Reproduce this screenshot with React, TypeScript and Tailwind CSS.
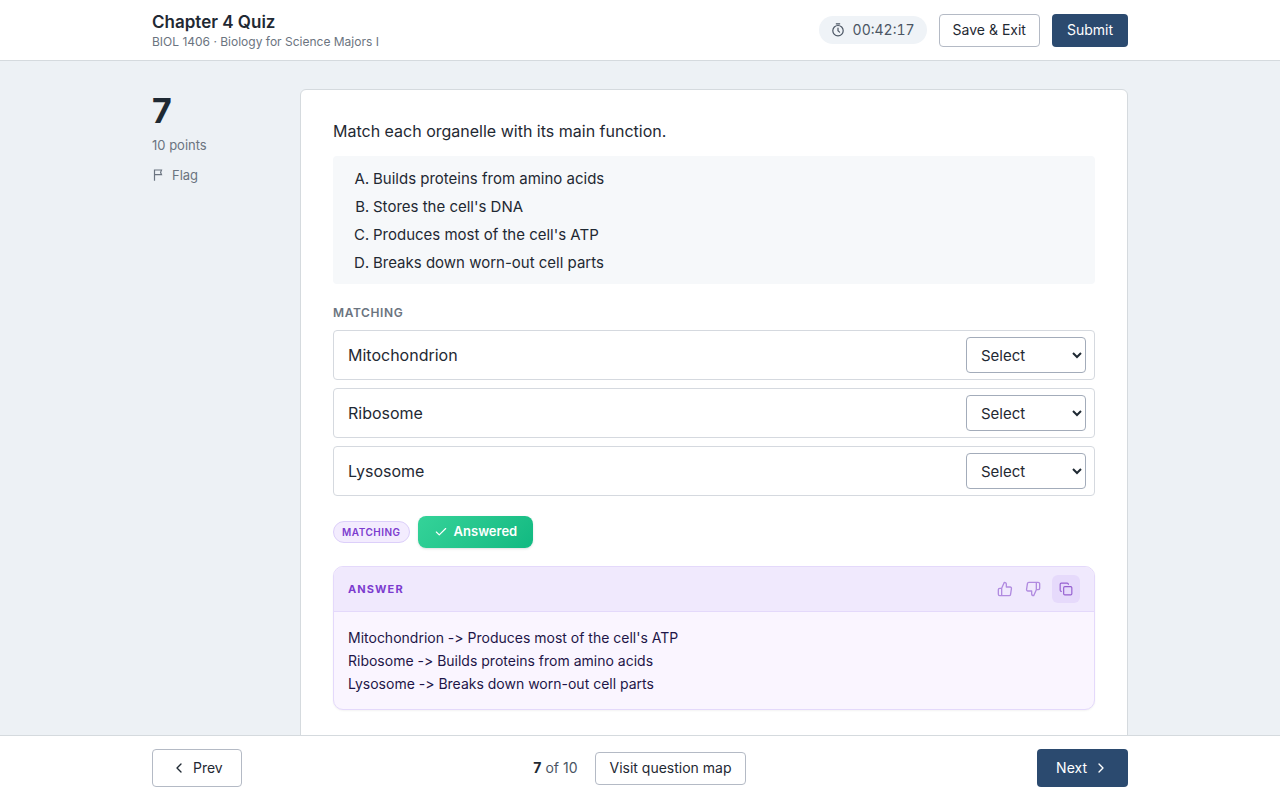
import * as React from "react";
import { Check, ChevronLeft, ChevronRight, Copy } from "lucide-react";
import { FiThumbsDown, FiThumbsUp } from "react-icons/fi";

const FUNCTIONS = [
  { id: "A", text: "Builds proteins from amino acids" },
  { id: "B", text: "Stores the cell's DNA" },
  { id: "C", text: "Produces most of the cell's ATP" },
  { id: "D", text: "Breaks down worn-out cell parts" },
];

const ORGANELLES = ["Mitochondrion", "Ribosome", "Lysosome"];

const ANSWERS = [
  "Mitochondrion -> Produces most of the cell's ATP",
  "Ribosome -> Builds proteins from amino acids",
  "Lysosome -> Breaks down worn-out cell parts",
];

const outlineButton =
  "rounded border border-[#b4bac5] bg-white text-[#1f2933] transition-colors hover:bg-[#f5f7fa]";
const solidButton = "rounded bg-[#2b4a6f] text-white transition-colors hover:bg-[#233d5c]";

function StopwatchIcon() {
  return (
    <svg
      width="14"
      height="14"
      viewBox="0 0 14 14"
      fill="none"
      stroke="currentColor"
      strokeWidth="1.2"
      strokeLinecap="round"
      aria-hidden="true"
    >
      <circle cx="7" cy="7.7" r="5.2" />
      <path d="M5.3 0.8h3.4M7 5v2.8l1.6 1.3" />
    </svg>
  );
}

function FlagIcon() {
  return (
    <svg
      width="12"
      height="12"
      viewBox="0 0 12 12"
      fill="none"
      stroke="currentColor"
      strokeWidth="1.2"
      aria-hidden="true"
    >
      <path d="M2.5 11.8V1h7L8.6 3.4l0.9 2.2h-7" />
    </svg>
  );
}

function Header() {
  return (
    <header className="border-b border-[#d5dade] bg-white">
      <div className="mx-auto flex h-15 max-w-[1024px] items-center justify-between px-6">
        <div className="pt-0.5">
          <h1 className="text-[17px] leading-[22px] font-semibold">Chapter 4 Quiz</h1>
          <p className="text-xs leading-[18px] text-[#6b7480]">
            BIOL 1406 · Biology for Science Majors I
          </p>
        </div>
        <div className="flex items-center gap-3">
          <div className="flex items-center gap-2 rounded-full bg-[#eff3f7] px-3 py-1 text-sm text-[#4b5563] tabular-nums">
            <StopwatchIcon />
            <span>00:42:17</span>
          </div>
          <button type="button" className={`${outlineButton} h-[33px] px-[13px] text-sm`}>
            Save &amp; Exit
          </button>
          <button type="button" className={`${solidButton} h-[33px] px-[15px] text-sm`}>
            Submit
          </button>
        </div>
      </div>
    </header>
  );
}

function AnswerPanel() {
  return (
    <section className="overflow-hidden rounded-[10px] border border-[#e4d9fb] bg-[#faf5ff] shadow-xs">
      <div className="flex h-[45px] items-center justify-between border-b border-[#e4d9fb] bg-[#f0e9fd] px-[14px]">
        <h3 className="text-[11px] font-bold tracking-widest text-[#7c3ccf]">ANSWER</h3>
        <div className="flex items-center gap-1.5">
          <div className="flex gap-0.5 text-[#b18be0]">
            <button type="button" aria-label="Good answer" className="grid h-7 w-[26px] place-items-center">
              <FiThumbsUp size={16} />
            </button>
            <button type="button" aria-label="Bad answer" className="grid h-7 w-[26px] place-items-center">
              <FiThumbsDown size={16} />
            </button>
          </div>
          <button
            type="button"
            aria-label="Copy answer"
            className="grid size-7 place-items-center rounded-md bg-[#e6dafb] text-[#955fd0]"
          >
            <Copy size={14} />
          </button>
        </div>
      </div>
      <div className="p-[14px] text-sm leading-[23px] text-[#1e1548] [font-variant-ligatures:none]">
        {ANSWERS.map((line) => (
          <p key={line}>{line}</p>
        ))}
      </div>
    </section>
  );
}

function Question() {
  const [picked, setPicked] = React.useState<Record<string, string>>({});

  return (
    <article className="min-w-0 flex-1 rounded-md border border-[#d5dade] bg-white px-8 pt-7 pb-8">
      <h2 className="text-base leading-[26px]">Match each organelle with its main function.</h2>
      <ol className="mt-3 list-[upper-alpha] rounded bg-[#f6f8fa] pt-[9px] pb-[7px] pl-10 text-[15px] leading-7">
        {FUNCTIONS.map((f) => (
          <li key={f.id}>{f.text}</li>
        ))}
      </ol>

      <h3 className="mt-5 text-xs leading-[18px] font-semibold tracking-wider text-[#6b7480]">MATCHING</h3>
      <div className="mt-2 flex flex-col gap-2">
        {ORGANELLES.map((name) => (
          <label
            key={name}
            className="flex h-[50px] items-center justify-between rounded border border-[#d5d9df] pr-2 pl-[14px]"
          >
            <span className="text-base">{name}</span>
            <select
              value={picked[name] ?? ""}
              onChange={(e) => setPicked({ ...picked, [name]: e.target.value })}
              className="h-9 w-[120px] rounded border border-[#a3acba] bg-white px-2.5 text-[15px]"
            >
              <option value="">Select</option>
              {FUNCTIONS.map((f) => (
                <option key={f.id} value={f.id}>
                  {f.id}
                </option>
              ))}
            </select>
          </label>
        ))}
      </div>

      <div className="mt-5 mb-[18px] flex items-center gap-2">
        <span className="rounded-full border border-[#dccffa] bg-[#f3ecfe] px-2 text-[10px] leading-5 font-semibold tracking-wider text-[#7c3ccf]">
          MATCHING
        </span>
        <button
          type="button"
          className="flex h-8 items-center gap-1.5 rounded-lg bg-linear-135 from-[#34d399] to-[#10b981] px-4 text-[13px] font-semibold text-white shadow-sm"
        >
          <Check size={14} />
          Answered
        </button>
      </div>

      <AnswerPanel />
    </article>
  );
}

function Footer() {
  return (
    <footer className="border-t border-[#d5dade] bg-white">
      <div className="mx-auto flex h-16 max-w-[1024px] items-center justify-between px-6">
        <button type="button" className={`${outlineButton} flex h-[38px] items-center gap-1.5 px-[18px] text-sm`}>
          <ChevronLeft size={16} />
          Prev
        </button>
        <div className="flex items-center gap-[18px] text-sm text-[#4b5563]">
          <span>
            <strong className="text-[#1f2933]">7</strong> of 10
          </span>
          <button type="button" className={`${outlineButton} h-[33px] px-[13px]`}>
            Visit question map
          </button>
        </div>
        <button type="button" className={`${solidButton} flex h-[38px] items-center gap-1.5 px-[19px] text-sm`}>
          Next
          <ChevronRight size={16} />
        </button>
      </div>
    </footer>
  );
}

export default function App() {
  return (
    <div className="flex h-screen flex-col bg-[#edf1f5] font-['Inter',sans-serif] text-[#1f2933]">
      <Header />
      <main className="min-h-0 flex-1 overflow-y-auto [scrollbar-width:none]">
        <div className="mx-auto flex max-w-[1024px] items-start gap-7 px-6 py-7">
          <aside className="w-[120px] shrink-0 text-[13px] text-[#6b7480]">
            <div className="text-[34px] leading-[44px] font-bold text-[#1f2933]">7</div>
            <p className="mt-0.5 leading-5">10 points</p>
            <button type="button" className="mt-2.5 flex items-center gap-2 leading-5">
              <FlagIcon />
              Flag
            </button>
          </aside>
          <Question />
        </div>
      </main>
      <Footer />
    </div>
  );
}
